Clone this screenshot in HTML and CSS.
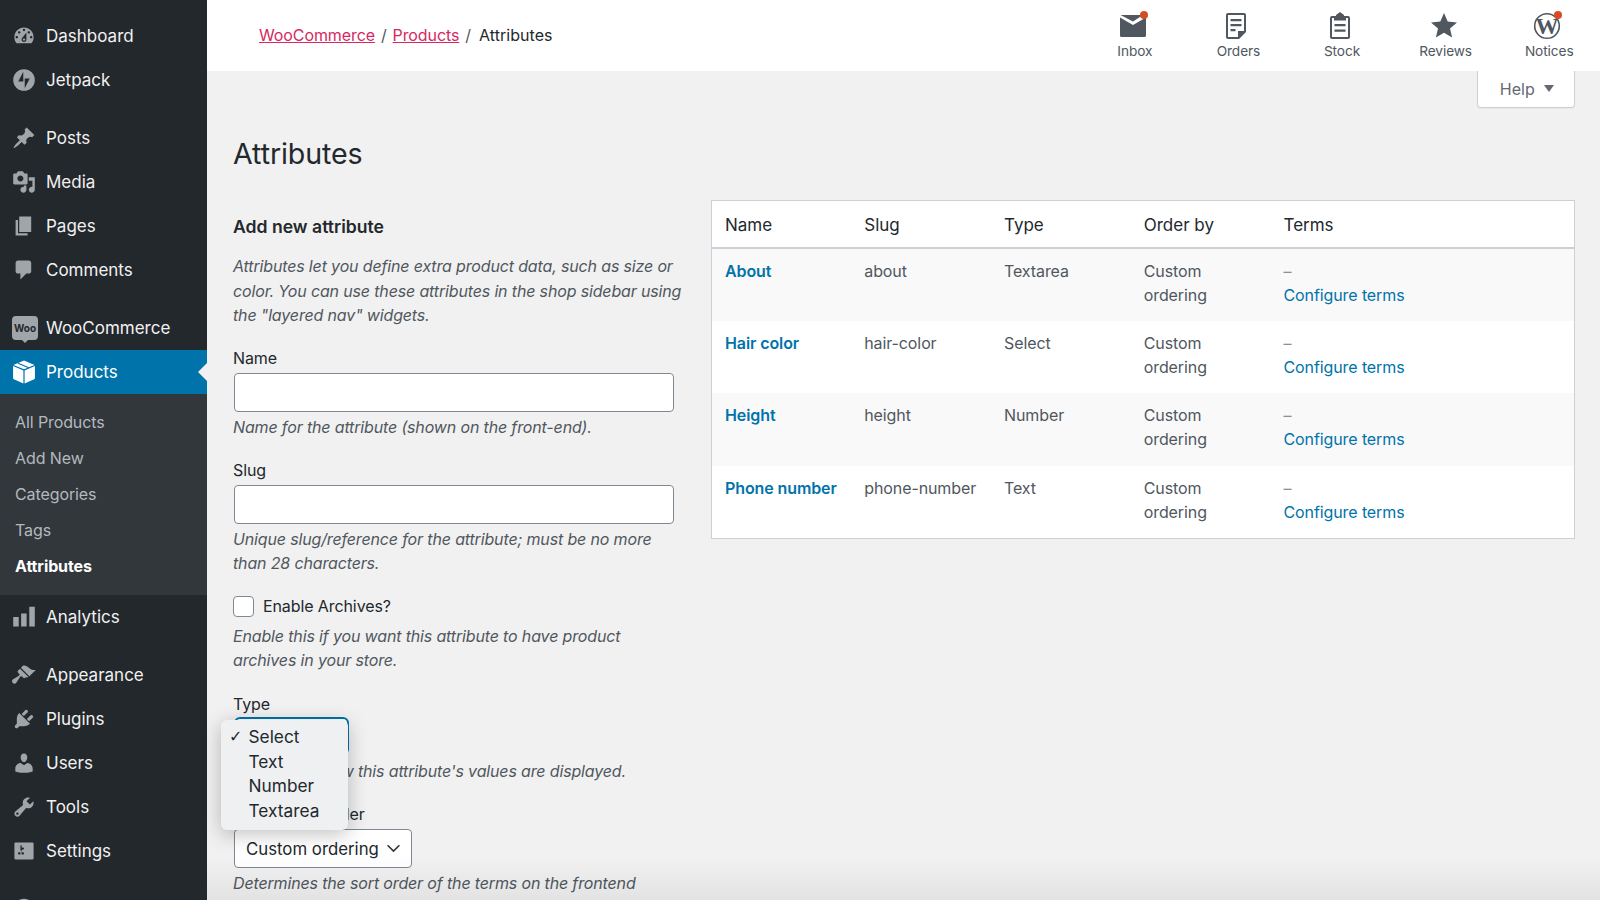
FILE: index.html
```html
<!DOCTYPE html>
<html>

<head>
  <meta charset="UTF-8">
  <title>Attributes</title>
  <link rel="stylesheet" href="styles.css">
</head>

<body>
  <div class="page">
    <nav class="sidebar">
      <a class="menu-item first"><svg viewBox="0 0 20 20"><path d="M3.76 16h12.48c1.1-1.37 1.76-3.11 1.76-5 0-4.42-3.58-8-8-8s-8 3.58-8 8c0 1.89.66 3.63 1.76 5zM10 4c.55 0 1 .45 1 1s-.45 1-1 1-1-.45-1-1 .45-1 1-1zM6 6c.55 0 1 .45 1 1s-.45 1-1 1-1-.45-1-1 .45-1 1-1zm8 0c.55 0 1 .45 1 1s-.45 1-1 1-1-.45-1-1 .45-1 1-1zm-5.37 5.55L12 7v6c0 1.1-.9 2-2 2s-2-.9-2-2c0-.57.24-1.08.63-1.45zM4 10c.55 0 1 .45 1 1s-.45 1-1 1-1-.45-1-1 .45-1 1-1zm12 0c.55 0 1 .45 1 1s-.45 1-1 1-1-.45-1-1 .45-1 1-1zm-5 3c0-.55-.45-1-1-1s-1 .45-1 1 .45 1 1 1 1-.45 1-1z" fill-rule="evenodd"/></svg>Dashboard</a>
      <a class="menu-item"><svg viewBox="0 0 20 20"><path d="M10 1a9 9 0 1 0 0 18 9 9 0 0 0 0-18zM9.4 11.2H5.2L9.4 3.2zM10.6 8.8h4.2l-4.2 8z" fill-rule="evenodd"/></svg>Jetpack</a>
      <a class="menu-item sep"><svg viewBox="0 0 20 20"><path d="M10.44 3.02l1.82-1.82 6.36 6.35-1.83 1.82c-1.05-.68-2.48-.57-3.41.36l-.75.75c-.92.93-1.04 2.35-.35 3.41l-1.83 1.82-2.41-2.41-2.8 2.79c-.42.42-3.38 2.71-3.8 2.29s1.86-3.39 2.28-3.81l2.79-2.79L4.1 9.36l1.83-1.82c1.05.69 2.48.57 3.4-.36l.75-.75c.93-.92 1.05-2.35.36-3.41z"/></svg>Posts</a>
      <a class="menu-item"><svg viewBox="0 0 20 20"><path d="M13 11V4c0-.55-.45-1-1-1h-1.67L9 1H5L3.67 3H2c-.55 0-1 .45-1 1v7c0 .55.45 1 1 1h10c.55 0 1-.45 1-1zM7 4.5c1.38 0 2.5 1.12 2.5 2.5S8.38 9.5 7 9.5 4.5 8.38 4.5 7 5.62 4.5 7 4.5zM14 6h5v10.5c0 1.38-1.12 2.5-2.5 2.5S14 17.88 14 16.5s1.12-2.5 2.5-2.5c.17 0 .34.02.5.05V9h-3V6zm-4 8.05V13h2v3.5c0 1.38-1.12 2.5-2.5 2.5S7 17.88 7 16.5 8.12 14 9.5 14c.17 0 .34.02.5.05z" fill-rule="evenodd"/></svg>Media</a>
      <a class="menu-item"><svg viewBox="0 0 20 20"><path d="M6 15V2h10v13H6zm-1 1h8v2H3V5h2v11z"/></svg>Pages</a>
      <a class="menu-item"><svg viewBox="0 0 20 20"><path d="M5 2h9c1.1 0 2 .9 2 2v7c0 1.1-.9 2-2 2h-2l-5 5v-5H5c-1.1 0-2-.9-2-2V4c0-1.1.9-2 2-2z"/></svg>Comments</a>
      <a class="menu-item sep"><span class="woo-badge">Woo</span>WooCommerce</a>
      <a class="menu-item current"><svg viewBox="0 0 20 20"><path d="M10 .5l8.800 3.600L10 7.800 1.200 4.100zM.9 5l8.600 3.700v10.800L1.500 16a1 1 0 0 1-.6-.9zM19.100 5v10.100a1 1 0 0 1-.6.9l-8 3.500V8.700z"/><path d="M5 2.700l9 3.700" stroke="#0073aa" stroke-width="1"/></svg>Products</a>
      <div class="submenu">
        <a>All Products</a>
        <a>Add New</a>
        <a>Categories</a>
        <a>Tags</a>
        <a class="active">Attributes</a>
      </div>
      <a class="menu-item"><svg viewBox="0 0 20 20"><path d="M1 10h4.600v8H1zM7.600 7h4.600v11H7.600zM14.400 1.500H19V18h-4.600z"/></svg>Analytics</a>
      <a class="menu-item sep"><svg viewBox="0 0 20 20"><path d="M14.480 11.060L7.410 3.990l1.500-1.500c.5-.56 2.300-.47 3.510.32 1.210.8 1.430 1.280 2.910 2.100 1.180.64 2.450 1.260 4.450.85zm-.71.71L6.700 4.700 4.930 6.470c-.39.39-.39 1.020 0 1.410l1.060 1.060c.39.39.39 1.030 0 1.420-.6.6-4.760 2.890-5.360 3.490-.78.78-.78 2.040 0 2.820.78.78 2.040.78 2.820 0 .6-.6 2.890-4.760 3.490-5.360.39-.39 1.030-.39 1.420 0l1.060 1.060c.39.39 1.020.39 1.410 0z"/></svg>Appearance</a>
      <a class="menu-item"><svg viewBox="0 0 20 20"><path d="M13.11 4.36L9.87 7.6 8 5.73l3.24-3.24c.35-.34 1.05-.2 1.56.32.52.51.66 1.21.31 1.55zm-8 1.77l.91-1.12 9.01 9.01-1.19.84c-.71.71-2.63 1.16-3.82 1.16H6.14L4.9 17.26c-.59.59-1.54.59-2.12 0-.59-.58-.59-1.53 0-2.12l1.24-1.24v-3.88c0-1.13.4-3.19 1.09-3.89zm7.26 3.97l3.24-3.24c.34-.35 1.04-.21 1.55.31.52.51.66 1.21.31 1.55l-3.24 3.25z"/></svg>Plugins</a>
      <a class="menu-item"><svg viewBox="0 0 20 20"><path d="M10 9.25c-2.27 0-2.73-3.44-2.73-3.44C7 4.02 7.82 2 9.97 2c2.16 0 2.98 2.02 2.71 3.81 0 0-.41 3.44-2.68 3.44zm0 2.57L12.72 10c2.39 0 4.52 2.33 4.52 4.53v2.49s-3.65 1.13-7.24 1.13c-3.65 0-7.24-1.13-7.24-1.13v-2.49c0-2.25 1.94-4.48 4.47-4.48z"/></svg>Users</a>
      <a class="menu-item"><svg viewBox="0 0 20 20"><path d="M16.68 9.77c-1.34 1.34-3.3 1.67-4.95.99l-5.41 6.52c-.99.99-2.59.99-3.58 0s-.99-2.59 0-3.57l6.52-5.42c-.68-1.65-.35-3.61.99-4.95 1.28-1.28 3.12-1.62 4.72-1.06l-2.89 2.89 2.82 2.82 2.86-2.87c.53 1.58.18 3.39-1.08 4.65zM3.81 16.21c.4.39 1.04.39 1.43 0 .4-.4.4-1.04 0-1.43-.39-.4-1.03-.4-1.43 0-.39.39-.39 1.03 0 1.43z" fill-rule="evenodd"/></svg>Tools</a>
      <a class="menu-item"><svg viewBox="0 0 20 20"><path d="M18 16V4c0-.55-.45-1-1-1H3c-.55 0-1 .45-1 1v12c0 .55.45 1 1 1h14c.55 0 1-.45 1-1zM8 11h1c.55 0 1 .45 1 1s-.45 1-1 1H8v1.5c0 .28-.22.5-.5.5s-.5-.22-.5-.5V13H6c-.55 0-1-.45-1-1s.45-1 1-1h1V5.5c0-.28.22-.5.5-.5s.5.22.5.5V7h1c.55 0 1 .45 1 1s-.45 1-1 1h-1v5.5c0 .28-.22.5-.5.5s-.5-.22-.5-.5V9z" fill-rule="evenodd"/></svg>Settings</a>
      <a class="menu-item sep collapse"><svg viewBox="0 0 20 20"><circle cx="10" cy="10" r="8.500"/></svg></a>
    </nav>

    <div class="main">
      <header class="topbar">
        <div class="breadcrumbs">
          <a>WooCommerce</a><span class="slash">/</span><a>Products</a><span class="slash">/</span><span class="crumb-current">Attributes</span>
        </div>
        <div class="activity">
          <div class="activity-item">
            <span class="activity-icon"><svg viewBox="0 0 28 28"><path d="M1 5.500l13 7.500 13-7.500V23.500a1.500 1.500 0 0 1-1.500 1.500h-23A1.500 1.500 0 0 1 1 23.500zM1.500 3H24l-10 6.500z"/></svg><i class="dot dot-inbox"></i></span>
            Inbox
          </div>
          <div class="activity-item">
            <span class="activity-icon"><svg viewBox="0 0 28 28"><path d="M6 1h16a2 2 0 0 1 2 2v17l-7 7H6a2 2 0 0 1-2-2V3a2 2 0 0 1 2-2zm0 2v22h10v-6h6V3z" fill-rule="evenodd"/><path d="M8.500 7h11v2.200h-11zM8.500 12h11v2.200h-11zM8.500 17h5v2.200h-5z"/><path d="M18 20h5l-5 5z"/></svg></span>
            Orders
          </div>
          <div class="activity-item">
            <span class="activity-icon"><svg viewBox="0 0 28 28"><path d="M6 4h4V3l4-3 4 3v1h4a2 2 0 0 1 2 2v19a2 2 0 0 1-2 2H6a2 2 0 0 1-2-2V6a2 2 0 0 1 2-2zm0 2v19h16V6h-2v2.500H8V6z" fill-rule="evenodd"/><path d="M8.500 12h11v2.200h-11zM8.500 17.500h11v2.200h-11z"/></svg></span>
            Stock
          </div>
          <div class="activity-item">
            <span class="activity-icon"><svg viewBox="0 0 28 28"><path d="M14 1l3.700 8.600 9.300.8-7 6.100 2.100 9.100L14 20.800l-8.100 4.800L8 16.500 1 10.400l9.300-.8z"/></svg></span>
            Reviews
          </div>
          <div class="activity-item">
            <span class="activity-icon"><svg viewBox="0 0 28 28"><circle cx="14" cy="14" r="12.300" fill="none" stroke="#50575e" stroke-width="1.600"/><text x="14" y="21.500" text-anchor="middle" class="wp-letter">W</text></svg><i class="dot dot-notices"></i></span>
            Notices
          </div>
        </div>
      </header>

      <div class="help-row">
        <button class="help-tab">Help <i class="help-caret"></i></button>
      </div>

      <h1>Attributes</h1>

      <div class="columns">
        <form class="form-col">
          <h2>Add new attribute</h2>
          <p class="desc">Attributes let you define extra product data, such as size or color. You can use these attributes in the shop sidebar using the "layered nav" widgets.</p>

          <div class="field">
            <label>Name</label>
            <input type="text">
            <p class="desc">Name for the attribute (shown on the front-end).</p>
          </div>

          <div class="field">
            <label>Slug</label>
            <input type="text">
            <p class="desc">Unique slug/reference for the attribute; must be no more than 28 characters.</p>
          </div>

          <div class="field">
            <div class="check-row"><span class="checkbox"></span>Enable Archives?</div>
            <p class="desc">Enable this if you want this attribute to have product archives in your store.</p>
          </div>

          <div class="field type-field">
            <label>Type</label>
            <div class="select-focus"></div>
            <p class="desc">Determines how this attribute's values are displayed.</p>
            <ul class="dropdown">
              <li class="checked">Select</li>
              <li>Text</li>
              <li>Number</li>
              <li>Textarea</li>
            </ul>
          </div>

          <div class="field">
            <label>Default sort order</label>
            <div class="select-box">Custom ordering<svg viewBox="0 0 14 14"><path d="M1.500 4l5.500 5.500L12.500 4" fill="none" stroke="#32373c" stroke-width="1.500"/></svg></div>
            <p class="desc">Determines the sort order of the terms on the frontend</p>
          </div>
        </form>

        <div class="table-col">
          <table>
            <thead>
              <tr><th>Name</th><th>Slug</th><th>Type</th><th>Order by</th><th>Terms</th></tr>
            </thead>
            <tbody>
              <tr>
                <td><a class="attr-name">About</a></td><td>about</td><td>Textarea</td><td>Custom ordering</td>
                <td><span class="dash">–</span><br><a>Configure terms</a></td>
              </tr>
              <tr>
                <td><a class="attr-name">Hair color</a></td><td>hair-color</td><td>Select</td><td>Custom ordering</td>
                <td><span class="dash">–</span><br><a>Configure terms</a></td>
              </tr>
              <tr>
                <td><a class="attr-name">Height</a></td><td>height</td><td>Number</td><td>Custom ordering</td>
                <td><span class="dash">–</span><br><a>Configure terms</a></td>
              </tr>
              <tr>
                <td><a class="attr-name">Phone number</a></td><td>phone-number</td><td>Text</td><td>Custom ordering</td>
                <td><span class="dash">–</span><br><a>Configure terms</a></td>
              </tr>
            </tbody>
          </table>
        </div>
      </div>

      <div class="bottom-fade"></div>
    </div>
  </div>
</body>

</html>
```

FILE: styles.css
```css
html, body {
  margin: 0;
  height: 100%;
  overflow: hidden;
}

body {
  font-family: Inter, "Liberation Sans", sans-serif;
  font-size: 16px;
  letter-spacing: -.1px;
  line-height: 24.6px;
  color: #32373c;
  background: #f1f1f1;
}

.page {
  display: flex;
  height: 900px;
  overflow: hidden;
}

/* sidebar */
.sidebar {
  flex: 0 0 207px;
  background: #23282d;
  padding-top: 14px;
  height: 900px;
  overflow: hidden;
  box-sizing: border-box;
}

.menu-item {
  display: flex;
  align-items: center;
  position: relative;
  height: 44px;
  padding-left: 12px;
  color: #f1f1f1;
  font-size: 17px;
  letter-spacing: 0;
}

.menu-item svg {
  width: 24px;
  height: 24px;
  margin-right: 10px;
  fill: #a0a5aa;
  flex: none;
}

.menu-item.sep {
  margin-top: 14px;
}

.menu-item.current {
  background: #0073aa;
  color: #fff;
}

.menu-item.current svg {
  fill: #fff;
}

.menu-item.current::after {
  content: "";
  position: absolute;
  right: 0;
  top: 13px;
  border: 9px solid transparent;
  border-right-color: #f1f1f1;
  border-left-width: 0;
}

.woo-badge {
  position: relative;
  width: 26px;
  height: 24px;
  margin-right: 8px;
  border-radius: 4px;
  background: #a0a5aa;
  color: #23282d;
  font-size: 10px;
  font-weight: 700;
  line-height: 24px;
  text-align: center;
}

.woo-badge::after {
  content: "";
  position: absolute;
  left: 10px;
  bottom: -3px;
  border: 3px solid transparent;
  border-top-color: #a0a5aa;
  border-bottom-width: 0;
}

.submenu {
  display: flex;
  flex-direction: column;
  height: 201px;
  padding-top: 9.500px;
  box-sizing: border-box;
  background: #32373c;
}

.submenu a {
  height: 36.200px;
  line-height: 36.200px;
  padding-left: 15px;
  color: #b4b9be;
  font-size: 16px;
}

.submenu a.active {
  color: #fff;
  font-weight: 700;
}

/* top bar */
.main {
  flex: 1;
  min-width: 0;
  position: relative;
}

.topbar {
  display: flex;
  justify-content: space-between;
  align-items: center;
  height: 71px;
  background: #fff;
  padding-left: 52px;
}

.breadcrumbs a {
  color: #d6295f;
  text-decoration: underline;
}

.breadcrumbs {
  color: #23282d;
}

.slash {
  margin: 0 6px;
  color: #50575e;
}

.crumb-current {
  margin-left: 2px;
  letter-spacing: .05px;
}

.activity {
  display: flex;
  margin-right: -1px;
}

.activity-item {
  display: flex;
  flex-direction: column;
  align-items: center;
  width: 103.600px;
  height: 71px;
  padding-top: 12px;
  box-sizing: border-box;
  font-size: 13.700px;
  line-height: 20px;
  color: #50575e;
}

.activity-icon {
  position: relative;
  width: 28px;
  height: 28px;
  margin-left: -4px;
  margin-bottom: 1px;
}

.activity-icon svg {
  display: block;
  width: 28px;
  height: 28px;
  fill: #50575e;
}

.wp-letter {
  font-family: "Liberation Serif", serif;
  font-size: 23px;
  font-weight: 700;
  fill: #50575e;
}

.dot {
  position: absolute;
  width: 8px;
  height: 8px;
  border-radius: 50%;
  background: #d54e21;
}

.dot-inbox {
  top: -1px;
  right: -1px;
}

.dot-notices {
  top: -1px;
  right: -1px;
}

.help-row {
  display: flex;
  justify-content: flex-end;
  padding-right: 25px;
}

.help-tab {
  width: 98px;
  height: 37px;
  padding: 0 0 0 2px;
  border: 1px solid #ccd0d4;
  border-top: 0;
  border-radius: 0 0 4px 4px;
  background: #fff;
  color: #646970;
  font: inherit;
  box-shadow: 0 1px 1px rgba(0, 0, 0, .04);
}

.help-caret {
  display: inline-block;
  margin-left: 5px;
  vertical-align: 3px;
  border: 5.500px solid transparent;
  border-top: 7px solid #646970;
  border-bottom: 0;
}

/* content */
h1 {
  margin: 26px 0 0 26px;
  font-size: 28.600px;
  line-height: 40px;
  font-weight: 400;
  color: #23282d;
}

.columns {
  display: flex;
  margin-top: 26px;
  padding-left: 26px;
  padding-right: 25px;
}

.form-col {
  flex: 0 0 452px;
  margin-right: 26px;
  padding-top: 15px;
}

h2 {
  margin: 0;
  font-size: 17.600px;
  line-height: 24px;
  font-weight: 600;
  letter-spacing: 0;
  color: #23282d;
}

.desc {
  margin: 0;
  font-style: italic;
  letter-spacing: -.15px;
  color: #50575e;
}

h2 + .desc {
  margin-top: 15px;
}

.field {
  margin-top: 18.500px;
  position: relative;
}

.field label {
  display: block;
  margin-bottom: 2px;
  color: #23282d;
}

.field input {
  display: block;
  width: 440px;
  height: 39px;
  margin: 0 0 3px 1px;
  padding: 0;
  box-sizing: border-box;
  border: 1.500px solid #7e8993;
  border-radius: 4px;
  background: #fff;
}

.check-row {
  display: flex;
  align-items: center;
  margin-bottom: 5px;
  color: #23282d;
}

.checkbox {
  width: 21px;
  height: 21px;
  margin-right: 9px;
  box-sizing: border-box;
  border: 1.500px solid #7e8993;
  border-radius: 4px;
  background: #fff;
}

.select-focus {
  width: 115px;
  height: 38px;
  margin: -1px 0 4px 1px;
  box-sizing: border-box;
  border: 2px solid #0073aa;
  border-radius: 6px;
  background: #fff;
}

.type-field {
  z-index: 2;
}

.dropdown {
  position: absolute;
  left: -12px;
  top: 28px;
  width: 127px;
  height: 110px;
  margin: 0;
  padding: 5.500px 0 0;
  box-sizing: border-box;
  list-style: none;
  background: #eef0f1;
  border-radius: 6px;
  box-shadow: 0 4px 20px rgba(0, 0, 0, .25);
  color: #23282d;
  font-size: 17.300px;
  letter-spacing: 0;
}

.dropdown li {
  position: relative;
  height: 24.600px;
  padding-left: 27.500px;
}

.dropdown li.checked::before {
  content: "✓";
  position: absolute;
  left: 8px;
  font-family: "DejaVu Sans", sans-serif;
  font-size: 16px;
}

.select-box {
  display: flex;
  align-items: center;
  width: 178px;
  height: 39px;
  margin-left: 1px;
  margin-bottom: 3px;
  padding-left: 11px;
  padding-top: 1px;
  box-sizing: border-box;
  border: 1.500px solid #7e8993;
  border-radius: 4px;
  background: #fff;
  color: #23282d;
  font-size: 16.800px;
  letter-spacing: 0;
}

.select-box svg {
  width: 15px;
  height: 15px;
  margin-left: 7px;
}

/* table */
.table-col {
  flex: 1;
  min-width: 0;
}

table {
  width: 100%;
  table-layout: fixed;
  border-collapse: collapse;
  background: #fff;
  border: 1px solid #ccd0d4;
}

th {
  height: 47px;
  padding: 4px 13px 0;
  box-sizing: border-box;
  text-align: left;
  font-weight: 400;
  color: #23282d;
  font-size: 17px;
  letter-spacing: 0;
  border-bottom: 2px solid #ccd0d4;
}

th:nth-child(-n+4) {
  width: 139.750px;
}

td {
  height: 72px;
  box-sizing: border-box;
  padding: 10px 13px;
  vertical-align: top;
  color: #50575e;
}

tbody tr:nth-child(odd) td,
tbody tr:last-child td {
  height: 73px;
}

tbody tr:nth-child(odd) {
  background: #f9f9f9;
}

td a {
  color: #0073aa;
}

.attr-name {
  font-weight: 600;
}

.dash {
  color: #8c8f94;
}

/* soft shade along the bottom edge of the capture */
.bottom-fade {
  position: absolute;
  left: 0;
  right: 0;
  top: 855px;
  height: 45px;
  background: linear-gradient(rgba(0, 0, 0, 0), rgba(0, 0, 0, .06));
}
```
